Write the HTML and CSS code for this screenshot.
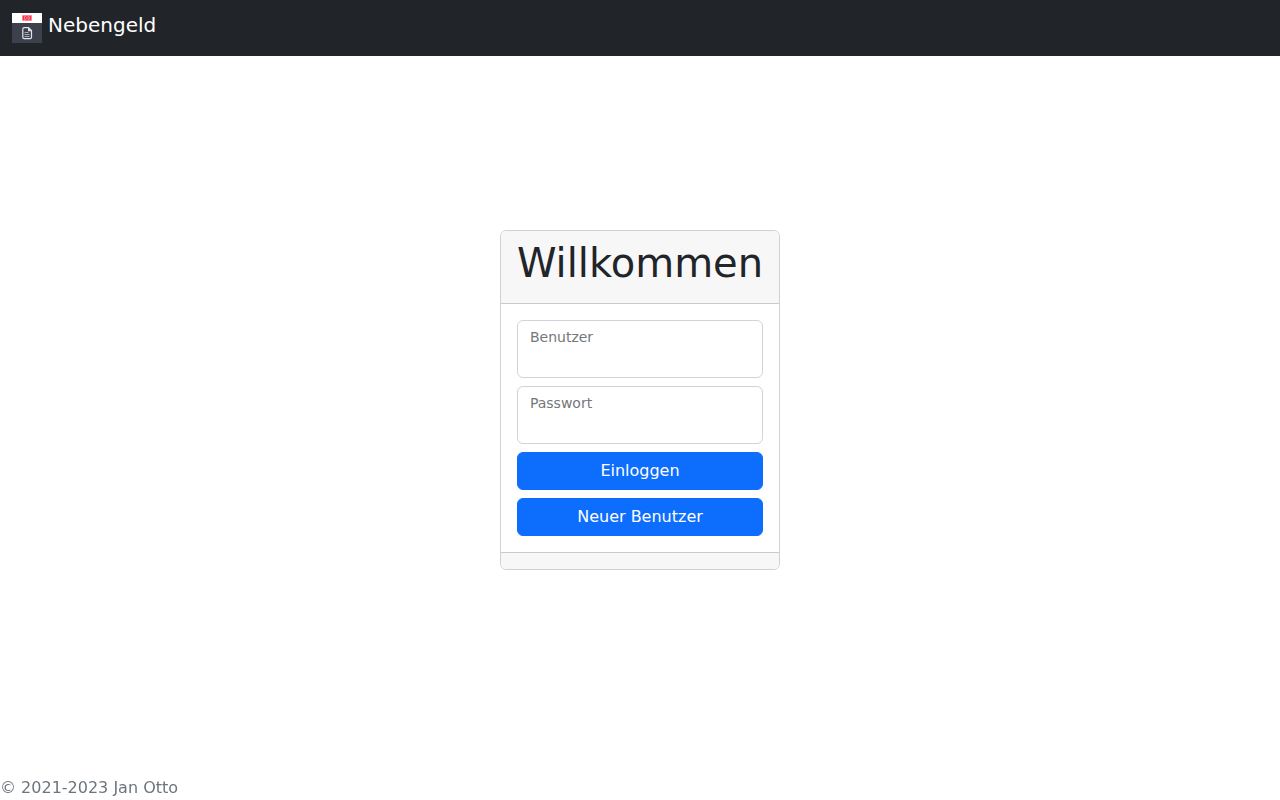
FILE: index.html
```html
<!DOCTYPE html>
<html lang="de">
<head>
<meta charset="utf-8">
<meta name="viewport" content="width=device-width, initial-scale=1">
<title>Nebengeld</title>
<link rel="stylesheet" href="styles.css">
</head>
<body>
<header class="navbar">
  <a class="brand" href="#">
    <svg class="logo" viewBox="0 0 30 30" aria-hidden="true">
      <rect width="30" height="30" fill="#3c414d"/>
      <rect width="30" height="10" fill="#fff"/>
      <rect x="10" y="2" width="10" height="6" rx="1" fill="#ff8593"/>
      <rect x="11" y="3" width="8" height="4" fill="#f5304a"/>
      <path d="M12.5 3.500v3h1l.8-.8V4.300l-.8-.8zM16 3.500v3h1l.8-.7-.6-.8.6-.8-.8-.7z" fill="none" stroke="#ffb4be" stroke-width=".6"/>
      <path d="M12.200 14.600h4.300l3 3v6.600q0 1.400-1.400 1.400h-5.900q-1.400 0-1.400-1.400V16q0-1.400 1.400-1.400z" fill="none" stroke="#e4e5e8" stroke-width="1.200"/>
      <path d="M16 14.500v3.800h3.800z" fill="#e4e5e8"/>
      <path d="M12.500 19.500h4M12.500 21.500h5M12.500 23.500h5" stroke="#a8abb2" stroke-width="1"/>
    </svg>
    <span>Nebengeld</span>
  </a>
</header>
<main class="page">
  <section class="card">
    <div class="card-header"><h1>Willkommen</h1></div>
    <form class="card-body">
      <div class="field">
        <input id="user" type="text" size="10" autocomplete="username">
        <label for="user">Benutzer</label>
      </div>
      <div class="field">
        <input id="password" type="password" size="10" autocomplete="current-password">
        <label for="password">Passwort</label>
      </div>
      <button class="button" type="submit">Einloggen</button>
      <button class="button" type="button">Neuer Benutzer</button>
    </form>
    <div class="card-footer"></div>
  </section>
</main>
<footer class="footer">© 2021-2023 Jan Otto</footer>
</body>
</html>
```
FILE: styles.css
```css
*, *::before, *::after { box-sizing: border-box; }

body {
  margin: 0;
  font-family: "DejaVu Sans", sans-serif;
  font-size: 16px;
  line-height: 24px;
  color: #212529;
  background: #fff;
}

.navbar {
  position: fixed;
  top: 0;
  left: 0;
  right: 0;
  padding: 10px 12px 13px;
  background: #212529;
}

.brand {
  display: flex;
  align-items: flex-start;
  gap: 6px;
  font-size: 20px;
  line-height: 30px;
  color: #fff;
  text-decoration: none;
}

.logo {
  width: 30px;
  height: 30px;
  margin-top: 3px;
}

.page {
  display: flex;
  align-items: center;
  justify-content: center;
  min-height: 100vh;
}

.card {
  border: 1px solid #d0d1d2;
  border-radius: 6px;
  overflow: hidden;
}

.card-header {
  padding: 8px 16px;
  background: #f7f7f7;
  border-bottom: 1px solid #c9cacb;
}

h1 {
  margin: 0 0 8px;
  font-size: 40px;
  font-weight: 400;
  line-height: 48px;
}

.card-body {
  display: grid;
  gap: 8px;
  padding: 16px;
}

.field { position: relative; }

.field input {
  display: block;
  width: 100%;
  height: 58px;
  padding: 26px 12px 10px;
  font: inherit;
  color: inherit;
  background: #fff;
  border: 1px solid #ced4da;
  border-radius: 6px;
}

.field label {
  position: absolute;
  top: 7px;
  left: 13px;
  font-size: 14px;
  line-height: 20px;
  color: #75787b;
}

.button {
  padding: 6px 12px;
  font: inherit;
  color: #fff;
  background: #0d6efd;
  border: 1px solid #0d6efd;
  border-radius: 6px;
}

.card-footer {
  height: 17px;
  background: #f7f7f7;
  border-top: 1px solid #c9cacb;
}

.footer {
  position: fixed;
  bottom: 0;
  left: 0;
  color: #6c757d;
}
```
